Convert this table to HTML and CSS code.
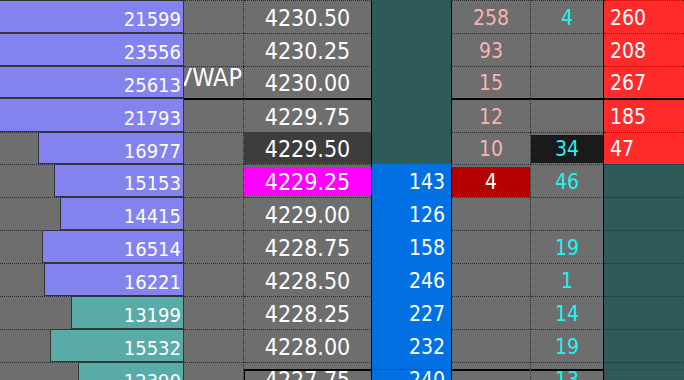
FILE: index.html
```html
<!DOCTYPE html>
<html>
<head>
<meta charset="utf-8">
<link rel="stylesheet" href="styles.css">
</head>
<body>
<div class="ladder">
  <div class="row">
    <div class="c c1"><div class="bar purple" style="width:190px">21599</div></div>
    <div class="c c2"></div>
    <div class="c c3">4230.50</div>
    <div class="c c4 teal"></div>
    <div class="c c5">258</div>
    <div class="c c6">4</div>
    <div class="c c7 red">260</div>
  </div>
  <div class="row">
    <div class="c c1"><div class="bar purple" style="width:190px">23556</div></div>
    <div class="c c2"></div>
    <div class="c c3">4230.25</div>
    <div class="c c4 teal"></div>
    <div class="c c5">93</div>
    <div class="c c6"></div>
    <div class="c c7 red">208</div>
  </div>
  <div class="row short">
    <div class="c c1"><div class="bar purple" style="width:190px">25613</div></div>
    <div class="c c2 vwap"><span>VWAP</span></div>
    <div class="c c3">4230.00</div>
    <div class="c c4 teal"></div>
    <div class="c c5">15</div>
    <div class="c c6"></div>
    <div class="c c7 red">267</div>
  </div>
  <div class="row tall sep">
    <div class="c c1"><div class="bar purple" style="width:190px">21793</div></div>
    <div class="c c2"></div>
    <div class="c c3">4229.75</div>
    <div class="c c4 teal"></div>
    <div class="c c5">12</div>
    <div class="c c6"></div>
    <div class="c c7 red">185</div>
  </div>
  <div class="row short">
    <div class="c c1"><div class="bar purple" style="width:146px">16977</div></div>
    <div class="c c2"></div>
    <div class="c c3 hl-dark">4229.50</div>
    <div class="c c4 teal"></div>
    <div class="c c5">10</div>
    <div class="c c6 hl-black">34</div>
    <div class="c c7 red">47</div>
  </div>
  <div class="row">
    <div class="c c1"><div class="bar purple" style="width:130px">15153</div></div>
    <div class="c c2"></div>
    <div class="c c3 hl-mag">4229.25</div>
    <div class="c c4 blue">143</div>
    <div class="c c5 hl-red">4</div>
    <div class="c c6">46</div>
    <div class="c c7 teal"></div>
  </div>
  <div class="row">
    <div class="c c1"><div class="bar purple" style="width:124px">14415</div></div>
    <div class="c c2"></div>
    <div class="c c3">4229.00</div>
    <div class="c c4 blue">126</div>
    <div class="c c5"></div>
    <div class="c c6"></div>
    <div class="c c7 teal"></div>
  </div>
  <div class="row">
    <div class="c c1"><div class="bar purple" style="width:142px">16514</div></div>
    <div class="c c2"></div>
    <div class="c c3">4228.75</div>
    <div class="c c4 blue">158</div>
    <div class="c c5"></div>
    <div class="c c6">19</div>
    <div class="c c7 teal"></div>
  </div>
  <div class="row">
    <div class="c c1"><div class="bar purple" style="width:140px">16221</div></div>
    <div class="c c2"></div>
    <div class="c c3">4228.50</div>
    <div class="c c4 blue">246</div>
    <div class="c c5"></div>
    <div class="c c6">1</div>
    <div class="c c7 teal"></div>
  </div>
  <div class="row">
    <div class="c c1"><div class="bar green" style="width:113px">13199</div></div>
    <div class="c c2"></div>
    <div class="c c3">4228.25</div>
    <div class="c c4 blue">227</div>
    <div class="c c5"></div>
    <div class="c c6">14</div>
    <div class="c c7 teal"></div>
  </div>
  <div class="row">
    <div class="c c1"><div class="bar green" style="width:134px">15532</div></div>
    <div class="c c2"></div>
    <div class="c c3">4228.00</div>
    <div class="c c4 blue">232</div>
    <div class="c c5"></div>
    <div class="c c6">19</div>
    <div class="c c7 teal"></div>
  </div>
  <div class="row last">
    <div class="c c1"><div class="bar green" style="width:106px">12390</div></div>
    <div class="c c2"></div>
    <div class="c c3">4227.75</div>
    <div class="c c4 blue">240</div>
    <div class="c c5"></div>
    <div class="c c6">13</div>
    <div class="c c7 teal"></div>
  </div>
</div>
</body>
</html>
```
FILE: styles.css
```css
html, body {
  margin: 0;
  padding: 0;
}
body {
  width: 684px;
  height: 380px;
  overflow: hidden;
  background: #6e6e6e;
  color: #ffffff;
  font-family: "DejaVu Sans Condensed", "DejaVu Sans", sans-serif;
  font-stretch: condensed;
}
.ladder {
  display: flex;
  flex-direction: column;
}
.row {
  flex: none;
  display: grid;
  grid-template-columns: 184px 60px 128px 80px 79px 73px 80px;
  height: 33px;
}
.row.short { height: 32px; }
.row.tall { height: 34px; }

.c {
  box-sizing: border-box;
  min-width: 0;
  border-top: 1px dotted #2c2c2c;
  padding-top: 1px;
  display: flex;
  align-items: center;
  overflow: hidden;
  white-space: nowrap;
  font-size: 21px;
}
.sep .c { border-top: 2px solid #000; }

/* volume profile column */
.c1 {
  border-top: 0;
  padding: 0;
  align-items: stretch;
  justify-content: flex-end;
  background: repeating-linear-gradient(to right, #2c2c2c 0 1px, transparent 1px 2px) 0 0 / 100% 1px no-repeat, #6e6e6e;
}
.sep .c1 { border-top: 0; }
.bar {
  flex: none;
  box-sizing: border-box;
  border: 1px solid #353535;
  display: flex;
  align-items: center;
  justify-content: flex-end;
  padding: 5px 2px 0 0;
  font-size: 20px;
}
.bar.purple { background: #8383ef; }
.bar.green { background: #59aba7; }

.c2 { border-right: 1px dotted #2c2c2c; }
.vwap {
  justify-content: flex-end;
  padding: 0 1px 10px 0;
  font-size: 25px;
}
.vwap span { flex: none; }

.c3 {
  border-right: 1px solid #000;
  justify-content: center;
  font-size: 23px;
}
.c4 {
  border-right: 1px solid #000;
  justify-content: flex-end;
  padding-right: 6px;
}
.c4, .sep .c4 {
  border-top: 1px solid transparent;
}
.c5 {
  border-right: 1px dotted #2c2c2c;
  justify-content: center;
  color: #f7b3b3;
}
.c6 {
  border-right: 1px solid #000;
  justify-content: center;
  color: #22f2f2;
}
.c7 { padding-left: 6px; }

.teal { background: #2e5a59; }
.blue { background: #0070e2; }
.red { background: #ff2a2a; }

.hl-dark {
  background: #3d3d3d;
  border-top-color: #3d3d3d;
  border-top-style: solid;
}
.hl-mag {
  background: linear-gradient(#ff00ff, #ff00ff) 0 2px / 100% 29px no-repeat;
}
.hl-red {
  color: #ffffff;
  background: linear-gradient(#b40000, #b40000) 0 2px / 100% 30px no-repeat;
}
.hl-black {
  background: linear-gradient(#1a1a1a, #1a1a1a) 0 2px / 100% 28px no-repeat;
}

/* last row markers */
.last .c3 {
  background:
    linear-gradient(#000, #000) 0 6px / 100% 2px no-repeat,
    linear-gradient(#000, #000) 0 6px / 1px 100% no-repeat;
}
.last .c5, .last .c6 {
  background: linear-gradient(#000, #000) 0 6px / 100% 2px no-repeat;
}
.last .c4 {
  background: linear-gradient(#80209a, #80209a) 0 6px / 100% 1px no-repeat, #0070e2;
}
.last .c7 {
  background:
    linear-gradient(#444, #444) 0 6px / 100% 1px no-repeat,
    linear-gradient(#444, #444) 0 6px / 1px 100% no-repeat,
    #2e5a59;
}
```
